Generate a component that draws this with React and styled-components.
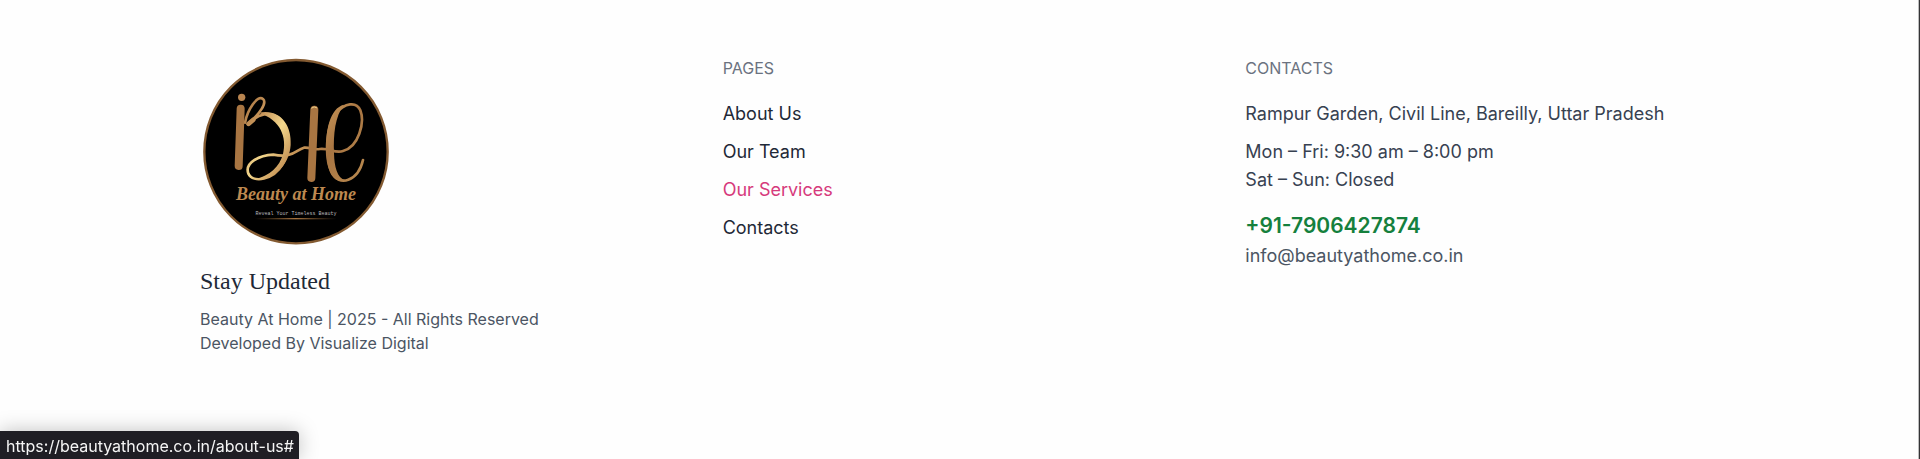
import React from "react";
import styled, { createGlobalStyle } from "styled-components";

const GlobalStyle = createGlobalStyle`
  *, *::before, *::after { box-sizing: border-box; }
  body {
    margin: 0;
    background: #fefefe;
    color: #374151;
    font-family: Inter, "Liberation Sans", sans-serif;
    font-size: 18px;
    line-height: 28px;
  }
`;

const Page = styled.div`
  min-height: 100vh;
  box-shadow: inset -1px 0 0 #343436, inset -2px 0 0 #bdbdbd;
`;

const Footer = styled.footer`
  display: grid;
  grid-template-columns: repeat(3, minmax(0, 1fr));
  gap: 48px;
  max-width: 1520px;
  margin: 0 auto;
  padding: 56px 0;
`;

const Column = styled.section`
  display: flex;
  flex-direction: column;
  align-items: flex-start;
`;

const Logo = styled.svg`
  display: block;
  width: 192px;
  height: 192px;
`;

const Title = styled.h2`
  margin: 17px 0 10px;
  color: #1f2937;
  font-family: "Liberation Serif", serif;
  font-size: 24px;
  font-weight: 400;
  line-height: 32px;
`;

const Copyright = styled.p`
  margin: 0;
  color: #4b5563;
  font-size: 16px;
  line-height: 24px;
`;

const Heading = styled.h3`
  margin: 0 0 20px;
  color: #6b7280;
  font-size: 16px;
  font-weight: 400;
  line-height: 24px;
  text-transform: uppercase;
`;

const LinkList = styled.ul`
  display: flex;
  flex-direction: column;
  gap: 10px;
  margin: 0;
  padding: 0;
  list-style: none;
`;

const PageLink = styled.a`
  color: ${({ $active }) => ($active ? "#d63a7c" : "#1f2937")};
  text-decoration: none;
`;

const Details = styled.p`
  margin: 0 0 ${({ $gap }) => $gap}px;
`;

const Phone = styled.a`
  color: #15803d;
  font-size: 21px;
  font-weight: 600;
  line-height: 32px;
  text-decoration: none;
`;

const Email = styled.a`
  color: #4b5563;
  text-decoration: none;
`;

const StatusBar = styled.div`
  position: fixed;
  bottom: 0;
  left: 0;
  padding: 3px 5px 1px 6px;
  border-radius: 0 4px 0 0;
  background: #1f1e24;
  box-shadow: 0 0 20px rgba(0, 0, 0, 0.25);
  color: #f5f5f5;
  font-size: 16px;
  line-height: 24px;
`;

const links = ["About Us", "Our Team", "Our Services", "Contacts"];

function BrandLogo() {
  return (
    <Logo viewBox="30 18 576 576" role="img" aria-label="Beauty at Home">
      <defs>
        <linearGradient id="gold" gradientUnits="userSpaceOnUse" x1="160" y1="150" x2="520" y2="390">
          <stop offset="0" stopColor="#a87542" />
          <stop offset="0.16" stopColor="#c7955a" />
          <stop offset="0.32" stopColor="#f3d78c" />
          <stop offset="0.48" stopColor="#c9985a" />
          <stop offset="0.7" stopColor="#a87542" />
          <stop offset="1" stopColor="#b98a50" />
        </linearGradient>
        <linearGradient id="rule" x1="0" x2="1">
          <stop offset="0" stopColor="#8a6035" stopOpacity="0" />
          <stop offset="0.5" stopColor="#a87542" />
          <stop offset="1" stopColor="#8a6035" stopOpacity="0" />
        </linearGradient>
      </defs>
      <circle cx="318" cy="305" r="275" fill="#000" stroke="#835a31" strokeWidth="7" />
      <g fill="none" stroke="url(#gold)" strokeLinecap="round" strokeLinejoin="round" strokeWidth="8">
        <path d="M165 218C173 178 202 135 219 147C232 158 209 192 174 222" />
        <path d="M173 223C207 187 243 184 269 206C304 238 303 302 277 344C251 389 190 401 175 371C163 337 209 316 250 314C307 326 316 300 342 293C362 291 367 301 390 297C419 294 435 311 459 303C506 291 525 218 511 181C499 153 464 159 439 189C408 225 403 319 424 366C447 414 505 392 519 330" />
        <path d="M176 221L190 209" strokeWidth="14" />
      </g>
      <g fill="url(#gold)">
        <path d="M205 188C270 174 306 225 302 285C298 345 251 393 195 388C240 377 269 350 279 312C291 264 274 209 205 188Z" />
        <path d="M462 164C419 174 405 245 409 310C412 369 432 400 466 392C441 383 433 350 432 310C430 250 435 200 462 164Z" />
      </g>
      <g fill="none" stroke="#a87542" strokeLinecap="round" strokeWidth="24">
        <path d="M152 176L146 348" />
        <path d="M373 179L364 384" />
      </g>
      <path d="M365 174Q372 167 380 173" fill="none" stroke="#f0d28b" strokeLinecap="round" strokeWidth="3" />
      <circle cx="155" cy="142" r="11" fill="#b98550" />
      <text x="318" y="451" textAnchor="middle" fill="#bd8950" fontFamily="Liberation Serif, serif" fontSize="54" fontStyle="italic" fontWeight="700">
        Beauty at Home
      </text>
      <text x="318" y="494" textAnchor="middle" fill="#b9b9bd" fontFamily="Liberation Mono, monospace" fontSize="15">
        Reveal Your Timeless Beauty
      </text>
      <rect x="195" y="504" width="245" height="4" fill="url(#rule)" />
    </Logo>
  );
}

export default function App() {
  return (
    <>
      <GlobalStyle />
      <Page>
        <Footer>
          <Column>
            <BrandLogo />
            <Title>Stay Updated</Title>
            <Copyright>
              Beauty At Home | 2025 - All Rights Reserved
              <br />
              Developed By Visualize Digital
            </Copyright>
          </Column>
          <Column>
            <Heading>Pages</Heading>
            <LinkList>
              {links.map((label) => (
                <li key={label}>
                  <PageLink href="#" $active={label === "Our Services"}>
                    {label}
                  </PageLink>
                </li>
              ))}
            </LinkList>
          </Column>
          <Column>
            <Heading>Contacts</Heading>
            <Details $gap={10}>Rampur Garden, Civil Line, Bareilly, Uttar Pradesh</Details>
            <Details $gap={16}>
              Mon – Fri: 9:30 am – 8:00 pm
              <br />
              Sat – Sun: Closed
            </Details>
            <Phone href="tel:+917906427874">+91-7906427874</Phone>
            <Email href="mailto:info@beautyathome.co.in">info@beautyathome.co.in</Email>
          </Column>
        </Footer>
      </Page>
      <StatusBar>https://beautyathome.co.in/about-us#</StatusBar>
    </>
  );
}
